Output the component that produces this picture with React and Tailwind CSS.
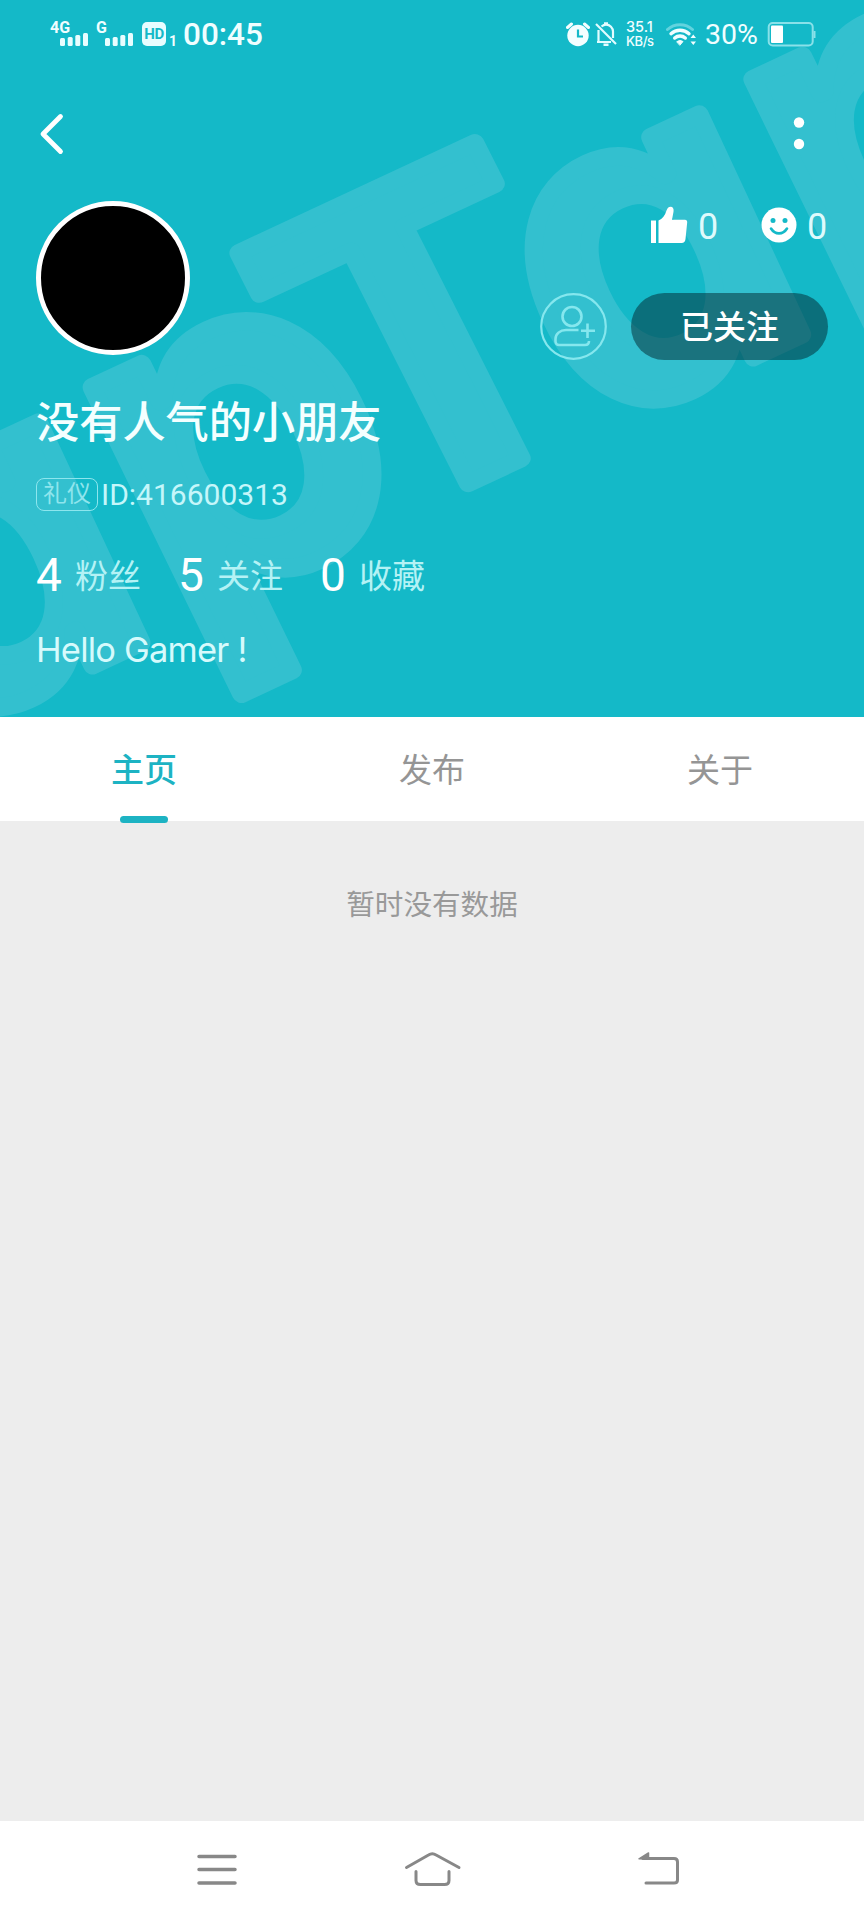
const stats = [
  { value: 4, label: '粉丝', cls: 'w-[142px]' },
  { value: 5, label: '关注', cls: 'w-[142px]' },
  { value: 0, label: '收藏', cls: 'w-[142px]' },
]

const tabs = [
  { label: '主页', active: true },
  { label: '发布' },
  { label: '关于' },
]

// brand lettering behind the header, one entry per letter along the slanted baseline
const marks = [
  { ch: 'a', x: -383, y: 642, sx: 0.9, sy: 0.93, skew: 0 },
  { ch: 'p', x: -106, y: 638, sx: 0.93, sy: 0.95, skew: 1 },
  { ch: 'T', x: 101, y: 636, sx: 0.94, sy: 0.88, skew: 1.8 },
  { ch: 'a', x: 346, y: 642, sx: 0.9, sy: 0.93, skew: 0 },
  { ch: 'p', x: 623, y: 638, sx: 0.93, sy: 0.95, skew: 1 },
]

function Watermark() {
  return (
    <svg className="absolute inset-0" width="864" height="717" viewBox="0 0 864 717" aria-hidden="true">
      <g
        transform="rotate(-25)"
        fill="#33c0cf"
        stroke="#33c0cf"
        strokeWidth="20"
        strokeLinejoin="round"
        className="font-['Inter',sans-serif] text-[478px] font-semibold [font-feature-settings:'cv11']"
      >
        {marks.map((m) => (
          <text key={m.x} transform={`translate(${m.x} ${m.y}) skewX(${m.skew}) scale(${m.sx} ${m.sy})`}>{m.ch}</text>
        ))}
      </g>
    </svg>
  )
}

function Signal() {
  return (
    <svg width="28" height="13" viewBox="0 0 28 13" fill="#e8fdff">
      <rect x="0" y="5" width="5" height="8" rx="1.5" />
      <rect x="7.7" y="4" width="5" height="9" rx="1.5" />
      <rect x="15.3" y="2" width="5" height="11" rx="1.5" />
      <rect x="23" y="0" width="5" height="13" rx="1.5" />
    </svg>
  )
}

function StatusBar() {
  return (
    <div className="flex h-[68px] items-center justify-between pl-[50px] pr-[48px] text-[#f0feff]">
      <div className="flex h-[28px] items-end pb-[2px]">
        <div className="flex w-[46px] items-end">
          <span className="w-[10px] whitespace-nowrap pb-[11px] text-[16px] font-bold leading-[15px]">4G</span>
          <Signal />
        </div>
        <div className="flex w-[46px] items-end">
          <span className="w-[9px] whitespace-nowrap pb-[11px] text-[16px] font-bold leading-[15px]">G</span>
          <Signal />
        </div>
        <div className="flex h-[24px] w-[24px] items-center justify-center rounded-[5px] bg-[#e8fdff] text-[15px] font-bold tracking-[-0.5px] text-[#14b9c8]">
          HD
        </div>
        <span className="w-[17px] pl-[3px] text-[14px] font-bold leading-[10px]">1</span>
        <span className="text-[31.5px] font-medium leading-[22px]">00:45</span>
      </div>

      <div className="flex h-[28px] items-center">
        <svg width="24" height="26" viewBox="0 0 24 26" fill="none">
          <circle cx="12" cy="14.5" r="10.7" fill="#f4feff" />
          <path d="M1.5 6.5 5.5 3M22.5 6.5 18.5 3" stroke="#f4feff" strokeWidth="3" strokeLinecap="round" />
          <path d="M12 8.5v7h5" stroke="#14b9c8" strokeWidth="2.2" />
        </svg>
        <svg className="ml-[5px]" width="22" height="26" viewBox="0 0 22 26" fill="none" stroke="#e2fcff" strokeWidth="2.2">
          <path d="M1 3 21 23" />
          <path d="M3.5 9v12M2 21h14" />
          <path d="M6.5 5.5C8 4.2 9.5 3.6 11 3.6c4 0 7 3.2 7 7V17" />
          <path d="M9 2.5h4M8.5 23.8h5" strokeWidth="2.5" />
        </svg>
        <div className="ml-[9px] w-[40px] pb-px font-['Inter',sans-serif] text-[14.5px] font-medium leading-[14px]">
          <div>35.1</div>
          <div className="text-[13px] tracking-[-0.4px]">KB/s</div>
        </div>
        <svg width="31" height="26" viewBox="0 0 31 26" fill="none" strokeLinecap="round">
          <path d="M1.5 8.5a18.5 18.5 0 0 1 25 0" stroke="#62d3de" strokeWidth="3" />
          <path d="M5 12.7a13.5 13.5 0 0 1 18 0" stroke="#f0feff" strokeWidth="3.4" />
          <path d="M8.7 17a8 8 0 0 1 10.6 0" stroke="#f0feff" strokeWidth="3.4" />
          <path d="M11 20.5a5 5 0 0 1 6 0l-3 3.5z" fill="#f0feff" stroke="#f0feff" />
          <path d="M24.5 17 27.3 13.5l2.7 3.500zM24.5 20.5l2.8 3.500 2.7-3.500z" fill="#f0feff" />
        </svg>
        <span className="w-[70px] whitespace-nowrap pl-[8px] pt-px text-[28.5px] leading-[28px]">30%</span>
        <svg width="49" height="26" viewBox="0 0 49 26" fill="none">
          <rect x="1.7" y="2" width="44" height="22.5" rx="4" stroke="#89e1e9" strokeWidth="2" />
          <rect x="4" y="4.5" width="12" height="17.5" rx="1" fill="#fff" />
          <path d="M47.5 10v7" stroke="#89e1e9" strokeWidth="2" />
        </svg>
      </div>
    </div>
  )
}

function Header() {
  return (
    <header className="relative h-[717px] shrink-0 overflow-hidden bg-[#14b9c8]">
      <Watermark />
      <div className="relative">
        <StatusBar />

        <div className="flex h-[133px] items-center justify-between pb-px pl-[38px] pr-[55px]">
          <svg width="28" height="44" viewBox="0 0 28 44" fill="none">
            <path d="M22.5 4.5 5 22 22.5 39.5" stroke="#fff" strokeWidth="4.8" strokeLinecap="round" strokeLinejoin="round" />
          </svg>
          <svg width="20" height="44" viewBox="0 0 20 44" fill="#fff">
            <circle cx="10" cy="10.5" r="5.2" />
            <circle cx="10" cy="32" r="5.2" />
          </svg>
        </div>

        <div className="flex h-[159px] justify-between pl-[36px] pr-[36px]">
          <div className="h-[154px] w-[154px] rounded-full border-[5px] border-white bg-black" />
          <div className="flex flex-col items-end justify-between">
            <div className="flex h-[48px] items-center text-[36px] leading-none text-[#dffafc]">
              <svg width="37" height="38" viewBox="0 0 37 38" fill="#fff">
                <rect x="0" y="14.5" width="5" height="22.5" />
                <path d="M7.5 14.5c4-1.5 6.5-5 8-10C16.5 1.5 18 .7 19.5.7c2.5 0 3.5 2 3 5l-1.5 8h13c1.5 0 2.3 1 2.2 2.5L34.5 33c-.3 2.500-1.500 4-4 4h-23z" />
              </svg>
              <span className="w-[73px] pl-[10px] pt-[4px]">0</span>
              <svg width="36" height="36" viewBox="0 0 36 36">
                <circle cx="18" cy="18" r="17.5" fill="#fff" />
                <circle cx="12" cy="13.5" r="2.5" fill="#14b9c8" />
                <circle cx="24" cy="13.5" r="2.5" fill="#14b9c8" />
                <path d="M10 21.5c4 6.5 12 6.5 16 0" fill="none" stroke="#14b9c8" strokeWidth="2.6" strokeLinecap="round" />
              </svg>
              <span className="w-[31px] pl-[10px] pt-[4px]">0</span>
            </div>
            <div className="flex items-center gap-[24px]">
              <svg width="67" height="67" viewBox="0 0 67 67" fill="none" stroke="#85e7ee" strokeWidth="2.6">
                <circle cx="33.5" cy="33.5" r="32.3" strokeWidth="2.2" />
                <circle cx="32" cy="23.5" r="9.5" />
                <path d="M38.5 37H26c-6 0-10.5 4-10.5 9v2.5c0 2 1.5 3.5 3.5 3.5h26c2.5 0 4-1.5 4-4" />
                <path d="M47.5 30.5V45M41 37.7h14" />
              </svg>
              <div className="flex h-[67px] w-[197px] items-center justify-center rounded-full bg-[#02252e]/50 pt-[2px] text-[33px] font-medium leading-[48px] text-white">
                已关注
              </div>
            </div>
          </div>
        </div>

        <div className="px-[36px]">
          <h1 className="mt-[34px] h-[58px] text-[43.2px] font-medium leading-[60px] text-[#f4ffff]">没有人气的小朋友</h1>
          <div className="mt-[24px] flex h-[36px] items-center text-[#c5f6fa]">
            <span className="flex h-[33px] w-[62px] items-center justify-center rounded-[8px] border-[1.5px] border-[#8de6ee] text-[24px] leading-none text-[#8fe5ed]">
              礼仪
            </span>
            <span className="ml-[3px] pt-px text-[30px] leading-none">ID:416600313</span>
          </div>
          <div className="mt-[37px] flex h-[56px] items-center">
            {stats.map((s) => (
              <div key={s.label} className={`flex items-baseline ${s.cls}`}>
                <span className="w-[39px] text-[46px] leading-[56px] text-white">{s.value}</span>
                <span className="relative -top-[3px] whitespace-nowrap text-[33px] leading-[56px] text-[#b4f2f5]">{s.label}</span>
              </div>
            ))}
          </div>
          <p className="mt-[22px] font-['Inter',sans-serif] text-[34.5px] tracking-[-0.8px] leading-[46px] text-[#d6fafc]">
            Hello Gamer !
          </p>
        </div>
      </div>
    </header>
  )
}

function NavBar() {
  return (
    <nav className="grid h-[99px] shrink-0 grid-cols-3 bg-white px-[106px] pt-[26px]">
      <svg className="mx-auto" width="60" height="44" viewBox="0 0 60 44" fill="none" stroke="#888" strokeWidth="3.5" strokeLinecap="round">
        <path d="M14 9.500h36M14 22.500h36M14 36h36" />
      </svg>
      <svg className="mx-auto" width="60" height="44" viewBox="0 0 60 44" fill="none" stroke="#888" strokeWidth="3" strokeLinecap="round" strokeLinejoin="round">
        <path d="M4.5 20.5 26.5 8q3.800-2.500 7.600 0L57 20.500" />
        <path d="M14 24.500v9q0 4 4.500 4h24q4.500 0 4.500-4v-9" />
      </svg>
      <svg className="mx-auto" width="60" height="44" viewBox="0 0 60 44" fill="none" stroke="#888" strokeWidth="3" strokeLinecap="round">
        <path d="M24 11.500h31q3.500 0 3.500 3.500v18q0 3-3.500 3H27" />
        <path d="M20 11.800 29.500 6v6z" fill="#888" strokeWidth="1.5" strokeLinejoin="round" />
      </svg>
    </nav>
  )
}

export default function App() {
  return (
    <div className="flex h-[1920px] w-[864px] flex-col bg-[#ededed] font-['Roboto','Noto_Sans_CJK_SC',sans-serif]">
      <Header />
      <div className="grid h-[104px] shrink-0 grid-cols-3 bg-white">
        {tabs.map((t) => (
          <div key={t.label} className="relative flex items-center justify-center pt-[4px]">
            <span className={`text-[33px] leading-[48px] ${t.active ? 'font-medium text-[#1db3c3]' : 'text-[#959595]'}`}>
              {t.label}
            </span>
            {t.active && (
              <span className="absolute -bottom-[2px] h-[7px] w-[48px] rounded-full bg-[#1db3c3]" />
            )}
          </div>
        ))}
      </div>
      <main className="flex-1 pt-[63px] text-center text-[28.6px] leading-[42px] text-[#999]">暂时没有数据</main>
      <NavBar />
    </div>
  )
}
